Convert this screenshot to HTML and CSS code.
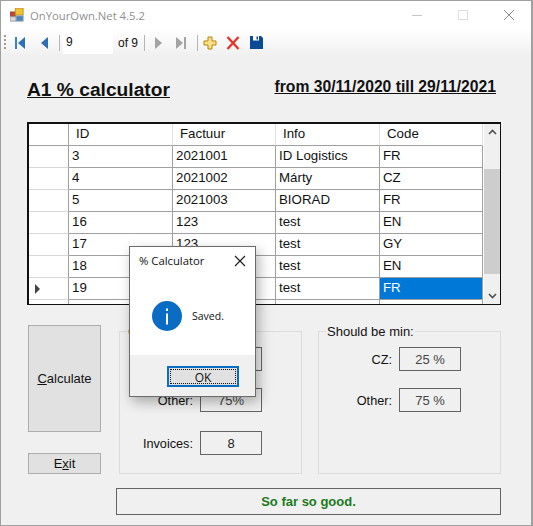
FILE: index.html
```html
<!DOCTYPE html>
<html>
<head>
    <meta charset="UTF-8">
    <title>OnYourOwn.Net 4.5.2</title>
    <link rel="stylesheet" href="styles.css">
</head>
<body>
    <div class="window">
        <div class="titlebar">
            <svg class="appicon" width="14" height="14" viewBox="0 0 16 16">
                <rect x="0" y="4" width="7" height="7" fill="#b5473c"/>
                <rect x="6" y="0" width="9" height="8" fill="#f1c232" stroke="#b98f20" stroke-width="1"/>
                <rect x="0" y="10" width="7" height="5" fill="#d9d9d9" stroke="#999" stroke-width="1"/>
                <rect x="7" y="9" width="8" height="6" fill="#4f81bd" stroke="#8aa" stroke-width="1"/>
            </svg>
            <span class="apptitle">OnYourOwn.Net 4.5.2</span>
            <div class="wincontrols">
                <svg width="12" height="12" viewBox="0 0 12 12"><path d="M1 6.5H11" stroke="#c4c4c4"/></svg>
                <svg width="12" height="12" viewBox="0 0 12 12"><rect x="1.5" y="1.5" width="9" height="9" fill="none" stroke="#dcdcdc"/></svg>
                <svg width="12" height="12" viewBox="0 0 12 12"><path d="M1 1L11 11M11 1L1 11" stroke="#8c8c8c"/></svg>
            </div>
        </div>

        <div class="toolbar">
            <span class="grip"></span>
            <svg class="tool first" width="12" height="14" viewBox="0 0 12 14"><rect x="1" y="1" width="2" height="12" fill="#3f7fc4"/><path d="M11 1V13L4 7Z" fill="#2f6db5"/></svg>
            <svg class="tool prev" width="8" height="12" viewBox="0 0 8 12"><path d="M7 0V12L0 6Z" fill="#2f6db5"/></svg>
            <span class="sep"></span>
            <span class="pos">9</span>
            <span class="of">of 9</span>
            <span class="sep"></span>
            <svg class="tool next" width="8" height="12" viewBox="0 0 8 12"><path d="M1 0V12L8 6Z" fill="#a3a3a3"/></svg>
            <svg class="tool last" width="12" height="14" viewBox="0 0 12 14"><path d="M1 1V13L8 7Z" fill="#a3a3a3"/><rect x="9" y="1" width="2" height="12" fill="#a3a3a3"/></svg>
            <span class="sep"></span>
            <svg class="tool add" width="14" height="14" viewBox="0 0 14 14"><path d="M5 1H9V5H13V9H9V13H5V9H1V5H5Z" fill="#fbe08a" stroke="#b8860b"/></svg>
            <svg class="tool del" width="14" height="14" viewBox="0 0 14 14"><path d="M1.5 1L12.5 13M12.5 1L1.5 13" stroke="#e0382c" stroke-width="2.4"/></svg>
            <svg class="tool save" width="13" height="13" viewBox="0 0 13 13"><path d="M0 0H11L13 2V13H0Z" fill="#0c4a96"/><rect x="3" y="0" width="6" height="4.5" fill="#fff"/><rect x="6.5" y="0.5" width="1.5" height="3" fill="#0c4a96"/><rect x="3" y="8" width="7" height="5" fill="#0c4a96"/></svg>
        </div>

        <div class="content">
            <div class="heading">
                <h1>A1 % calculator</h1>
                <h2>from 30/11/2020 till 29/11/2021</h2>
            </div>

            <div class="datagrid">
                <div class="rows">
                    <div class="row head"><span class="rh"></span><span>ID</span><span>Factuur</span><span>Info</span><span>Code</span></div>
                    <div class="row"><span class="rh"></span><span>3</span><span>2021001</span><span>ID Logistics</span><span>FR</span></div>
                    <div class="row"><span class="rh"></span><span>4</span><span>2021002</span><span>Márty</span><span>CZ</span></div>
                    <div class="row"><span class="rh"></span><span>5</span><span>2021003</span><span>BIORAD</span><span>FR</span></div>
                    <div class="row"><span class="rh"></span><span>16</span><span>123</span><span>test</span><span>EN</span></div>
                    <div class="row"><span class="rh"></span><span>17</span><span>123</span><span>test</span><span>GY</span></div>
                    <div class="row"><span class="rh"></span><span>18</span><span>123</span><span>test</span><span>EN</span></div>
                    <div class="row"><span class="rh current"></span><span>19</span><span>123</span><span>test</span><span class="selected">FR</span></div>
                    <div class="row"><span class="rh"></span><span></span><span></span><span></span><span></span></div>
                </div>
                <div class="scrollbar">
                    <svg width="17" height="17" viewBox="0 0 17 17"><path d="M5 10L8.5 6.5L12 10" fill="none" stroke="#505050" stroke-width="1.6"/></svg>
                    <div class="track"><div class="thumb"></div></div>
                    <svg width="17" height="17" viewBox="0 0 17 17"><path d="M5 7L8.5 10.5L12 7" fill="none" stroke="#505050" stroke-width="1.6"/></svg>
                </div>
            </div>

            <div class="lower">
                <div class="buttons">
                    <div class="btn calc"><span><u>C</u>alculate</span></div>
                    <div class="btn exit"><span>E<u>x</u>it</span></div>
                </div>
                <div class="groups">
                    <div class="group">
                        <div class="legend">Current:</div>
                        <div class="field"><label>CZ:</label><span class="box">25%</span></div>
                        <div class="field"><label>Other:</label><span class="box">75%</span></div>
                        <div class="field invoices"><label>Invoices:</label><span class="box">8</span></div>
                    </div>
                    <div class="group">
                        <div class="legend">Should be min:</div>
                        <div class="field"><label>CZ:</label><span class="box">25 %</span></div>
                        <div class="field"><label>Other:</label><span class="box">75 %</span></div>
                    </div>
                </div>
            </div>

            <div class="status">So far so good.</div>
        </div>

        <div class="dialog">
            <div class="dlgtitle">
                <span>% Calculator</span>
                <svg width="12" height="12" viewBox="0 0 12 12"><path d="M1 1L11 11M11 1L1 11" stroke="#1a1a1a" stroke-width="1.1"/></svg>
            </div>
            <div class="dlgbody">
                <svg width="30" height="30" viewBox="0 0 30 30"><circle cx="15" cy="15" r="15" fill="#0a6cc2"/><rect x="14" y="12.5" width="2" height="11" fill="#fff"/><rect x="14" y="7.5" width="2" height="2.4" fill="#fff"/></svg>
                <span>Saved.</span>
            </div>
            <div class="dlgfoot"><div class="okbtn"><span>OK</span></div></div>
        </div>
    </div>
</body>
</html>
```

FILE: styles.css
```css
* {
    box-sizing: border-box;
}

body {
    margin: 0;
    font-family: "Liberation Sans", Arial, sans-serif;
    color: #111;
}

.window {
    position: relative;
    width: 533px;
    height: 526px;
    background-color: #f0f0f0;
    border: 1px solid #a0a0a0;
    border-width: 1px 2px 1px 1px;
    overflow: hidden;
}

.titlebar {
    display: flex;
    align-items: center;
    height: 30px;
    padding-left: 9px;
    padding-bottom: 2px;
    background-color: #fff;
}

.apptitle {
    margin-left: 6px;
    font-family: "Open Sans", sans-serif;
    font-size: 11.3px;
    color: #8f8f8f;
}

.wincontrols {
    display: flex;
    gap: 34px;
    margin-left: auto;
    margin-right: 16px;
}

.toolbar {
    display: flex;
    align-items: center;
    height: 25px;
    padding-left: 3px;
    padding-bottom: 2px;
    background: linear-gradient(#fefefe, #f0f0f0);
}

.grip {
    width: 2px;
    height: 16px;
    margin-right: 8px;
    background: repeating-linear-gradient(#9a9a9a 0 2px, transparent 2px 4px);
}

.sep {
    width: 1px;
    height: 16px;
    background-color: #b5b5b5;
}

.tool {
    flex: none;
}

.prev {
    margin-left: 15px;
    margin-right: 10px;
}

.pos {
    width: 50px;
    height: 23px;
    margin-left: 3px;
    padding: 4px 3px;
    background-color: #fff;
    font-size: 12px;
}

.of {
    margin-left: 5px;
    margin-right: 6px;
    font-size: 12px;
}

.next {
    margin-left: 9px;
}

.last {
    margin-left: 13px;
    margin-right: 10px;
}

.add {
    margin-left: 5px;
}

.del {
    margin-left: 9px;
}

.save {
    margin-left: 10px;
}

.content {
    padding: 0 30px 0 26px;
}

.heading {
    display: flex;
    justify-content: space-between;
    align-items: flex-start;
    height: 66px;
    padding: 23px 5px 0 0;
}

.heading h1 {
    margin: 0;
    font-size: 19.2px;
    line-height: 22px;
    text-decoration: underline;
}

.heading h2 {
    margin: -1px 0 0;
    font-size: 15.7px;
    line-height: 18px;
    text-decoration: underline;
}

.datagrid {
    display: flex;
    width: 474px;
    height: 183px;
    background-color: #fff;
    border: 2px solid #111;
    border-width: 2px 1px 1px 2px;
    overflow: hidden;
}

.rows {
    width: 454px;
    flex: none;
}

.row {
    display: grid;
    grid-template-columns: 40px 104px 103px 104px 103px;
    height: 22px;
    font-size: 13.3px;
    line-height: 20px;
}

.row span {
    padding-left: 3px;
    border-right: 1px solid #a0a0a0;
    border-bottom: 1px solid #a0a0a0;
    white-space: nowrap;
    overflow: hidden;
}

.row .rh {
    position: relative;
    border-bottom-color: #d8d8d8;
}

.head span {
    padding-left: 7px;
    border-right-color: #e0e0e0;
}

.head .rh {
    border-right-color: #a0a0a0;
    border-bottom-color: #a0a0a0;
}

.row .current::after {
    content: "";
    position: absolute;
    left: 6px;
    top: 6px;
    border-left: 5px solid #444;
    border-top: 5px solid transparent;
    border-bottom: 5px solid transparent;
}

.row .selected {
    background-color: #0078d7;
    color: #fff;
}

.scrollbar {
    display: flex;
    flex-direction: column;
    width: 17px;
    height: 180px;
    margin-left: 1px;
    background-color: #f0f0f0;
}

.track {
    flex: 1;
    padding-top: 28px;
}

.thumb {
    height: 105px;
    background-color: #cdcdcd;
}

.lower {
    display: flex;
    margin-top: 20px;
    margin-left: 1px;
}

.buttons {
    display: flex;
    flex-direction: column;
    flex: none;
    width: 73px;
}

.btn {
    display: flex;
    align-items: center;
    justify-content: center;
    background-color: #e1e1e1;
    border: 1px solid #adadad;
    font-size: 13px;
}

.calc {
    height: 107px;
}

.exit {
    height: 21px;
    margin-top: 21px;
}

.groups {
    display: flex;
    gap: 16px;
    margin-left: 18px;
    padding-top: 6px;
}

.group {
    position: relative;
    flex: none;
    width: 183px;
    height: 143px;
    padding-top: 15px;
    border: 1px solid #dcdcdc;
}

.legend {
    position: absolute;
    left: 7px;
    top: -8px;
    padding: 0 1px;
    background-color: #f0f0f0;
    font-size: 13px;
    line-height: 15px;
}

.field {
    display: flex;
    align-items: center;
    justify-content: flex-end;
    gap: 7px;
    height: 24px;
    margin-bottom: 17px;
    padding-right: 39px;
    font-size: 12.7px;
}

.field label {
    padding-top: 1px;
}

.invoices {
    margin-top: 19px;
}

.box {
    width: 62px;
    height: 24px;
    border: 1px solid #646464;
    text-align: center;
    line-height: 24px;
    font-size: 13px;
    color: #444;
}

.invoices .box {
    color: #222;
}

.status {
    width: 385px;
    height: 27px;
    margin-top: 14px;
    margin-left: 89px;
    border: 1px solid #646464;
    text-align: center;
    font-size: 13px;
    font-weight: bold;
    line-height: 26px;
    color: #1c7a1c;
}

.dialog {
    position: absolute;
    left: 128px;
    top: 245px;
    width: 127px;
    height: 151px;
    display: flex;
    flex-direction: column;
    background-color: #fff;
    border: 1px solid #6b6b6b;
    box-shadow: 3px 5px 12px rgba(0, 0, 0, 0.3);
}

.dlgtitle {
    display: flex;
    align-items: center;
    justify-content: space-between;
    height: 27px;
    padding: 0 9px 0 9px;
    font-family: "Open Sans", sans-serif;
    font-size: 11.3px;
}

.dlgbody {
    display: flex;
    align-items: center;
    gap: 10px;
    height: 81px;
    padding: 3px 0 0 22px;
    font-family: "Open Sans", sans-serif;
    font-size: 10.5px;
}

.dlgfoot {
    flex: 1;
    padding: 11px 0 0 37px;
    background-color: #f0f0f0;
}

.okbtn {
    width: 72px;
    height: 21px;
    padding: 1px;
    border: 2px solid #0a6cc2;
    background-color: #e1e1e1;
    text-align: center;
    font-family: "Open Sans", sans-serif;
    font-size: 12px;
}

.okbtn span {
    display: block;
    height: 15px;
    line-height: 15px;
    border: 1px dotted #111;
}
```
